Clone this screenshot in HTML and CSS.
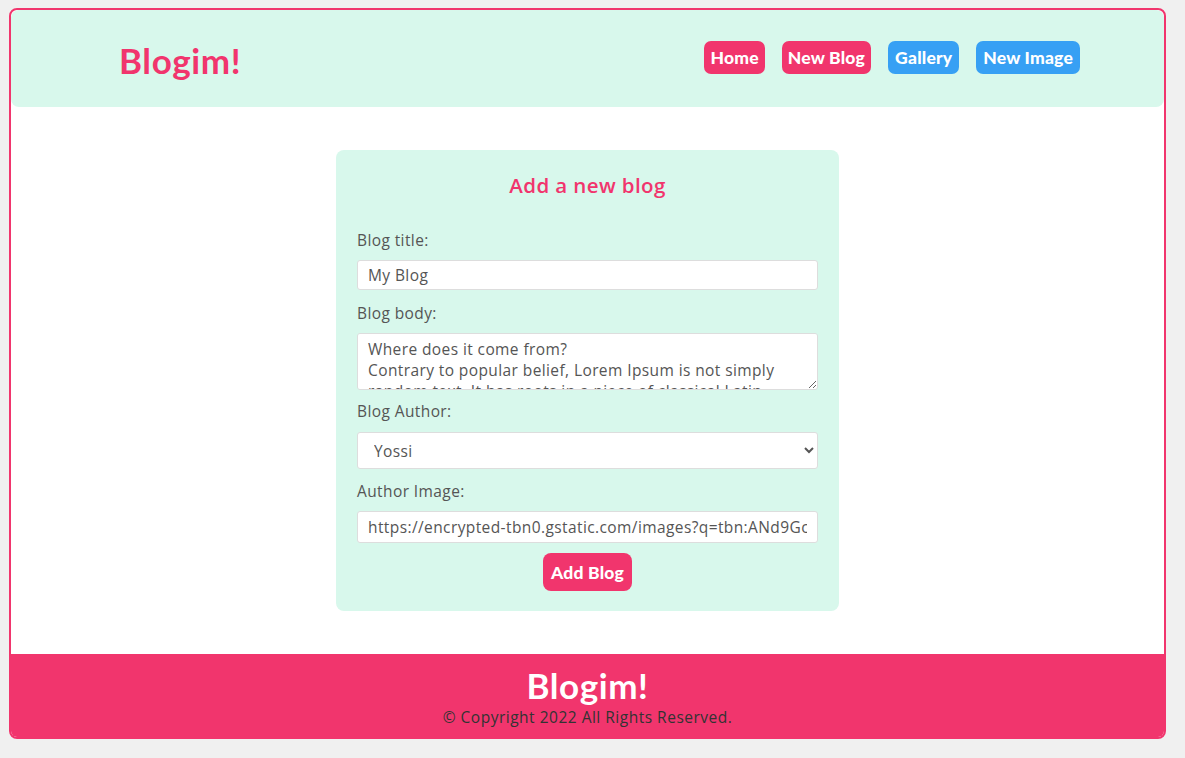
FILE: index.html
```html
<!DOCTYPE html>
<html lang="en">
<head>
<meta charset="utf-8">
<title>Blogim!</title>
<link rel="stylesheet" href="styles.css">
</head>
<body>
<div class="page">
  <header class="header">
    <div class="logo">Blogim!</div>
    <nav class="nav">
      <a class="btn pink" href="#">Home</a>
      <a class="btn pink" href="#">New Blog</a>
      <a class="btn blue" href="#">Gallery</a>
      <a class="btn blue" href="#">New Image</a>
    </nav>
  </header>
  <main class="main">
    <form class="card">
      <h2 class="card-title">Add a new blog</h2>
      <label class="label">Blog title:</label>
      <input class="field" type="text" value="My Blog">
      <label class="label">Blog body:</label>
      <textarea class="field area">Where does it come from?
Contrary to popular belief, Lorem Ipsum is not simply random text. It has roots in a piece of classical Latin literature from 45 BC, making it over 2000 years old.</textarea>
      <label class="label">Blog Author:</label>
      <select class="field select">
        <option>Yossi</option>
        <option>Mario</option>
      </select>
      <label class="label">Author Image:</label>
      <input class="field url" type="text" value="https://encrypted-tbn0.gstatic.com/images?q=tbn:ANd9GcQ">
      <button class="submit" type="button">Add Blog</button>
    </form>
  </main>
  <footer class="footer">
    <div class="footer-logo">Blogim!</div>
    <div class="copy">© Copyright 2022 All Rights Reserved.</div>
  </footer>
</div>
</body>
</html>
```

FILE: styles.css
```css
html, body {
  background: #f0f0f0;
}
body {
  margin: 8px 19px 0 9px;
  font-family: "Open Sans", "Noto Sans", sans-serif;
  color: #555;
}
.page {
  border: 2px solid #f1356d;
  border-radius: 8px;
  background: #fff;
  overflow: hidden;
}
.header {
  background: #d8f8ec;
  border-radius: 8px;
  height: 97px;
  display: flex;
  align-items: center;
  justify-content: space-between;
  padding: 0 84px 0 108px;
}
.logo {
  font-family: "Lato", sans-serif;
  font-size: 35px;
  font-weight: 700;
  letter-spacing: 0.6px;
  color: #f1356d;
  margin-top: 2px;
}
.nav {
  display: flex;
  gap: 17px;
  margin-top: -3px;
}
.btn {
  display: block;
  height: 33px;
  line-height: 33px;
  padding: 0 6px;
  border-radius: 7px;
  color: #fff;
  text-decoration: none;
  font-family: "Lato", sans-serif;
  font-weight: 900;
  font-size: 17.5px;
  letter-spacing: 0.2px;
}
.btn.pink { background: #f1356d; }
.btn.blue { background: #37a0f4; padding: 0 7px; }
.main {
  padding: 43px 0;
  display: flex;
  justify-content: center;
}
.card {
  width: 503px;
  box-sizing: border-box;
  background: #d8f8ec;
  border-radius: 8px;
  padding: 20px 21px 20px;
  display: flex;
  flex-direction: column;
}
.card-title {
  margin: 0 0 29px;
  text-align: center;
  color: #f1356d;
  font-size: 20.5px;
  font-weight: 600;
  letter-spacing: 0.4px;
  line-height: 30px;
}
.label {
  font-size: 15.5px;
  letter-spacing: 0.4px;
  line-height: 22px;
  margin-bottom: 9px;
  color: #555;
}
.field {
  box-sizing: border-box;
  width: 100%;
  height: 30px;
  border: 1px solid #ddd;
  border-radius: 3px;
  padding: 0 10px;
  font-family: "Open Sans", sans-serif;
  font-size: 15.5px;
  letter-spacing: 0.4px;
  color: #555;
  background: #fff;
  margin: 0 0 12px;
}
.area {
  height: 57px;
  padding: 5px 10px;
  line-height: 21px;
  resize: both;
  margin-bottom: 10px;
}
.select {
  height: 37px;
  padding: 0 12px;
  margin-top: 1px;
  margin-bottom: 11px;
}
.url {
  height: 32px;
  margin-bottom: 10px;
}
.submit {
  align-self: center;
  height: 38px;
  padding: 0 8px;
  border: none;
  border-radius: 8px;
  background: #f1356d;
  color: #fff;
  font-family: "Lato", sans-serif;
  font-weight: 900;
  font-size: 17.5px;
  letter-spacing: 0.2px;
}
.footer {
  background: #f1356d;
  height: 83px;
  text-align: center;
  display: flex;
  flex-direction: column;
  align-items: center;
  justify-content: center;
}
.footer-logo {
  color: #fff;
  font-family: "Lato", sans-serif;
  font-size: 35px;
  font-weight: 700;
  letter-spacing: 0.6px;
  line-height: 38px;
  margin-top: 2px;
}
.copy {
  color: #333;
  font-size: 15.5px;
  letter-spacing: 0.5px;
  line-height: 22px;
  margin-top: 2px;
}
```
